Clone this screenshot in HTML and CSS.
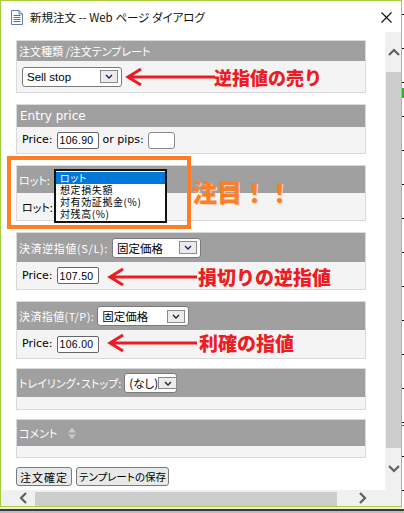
FILE: index.html
```html
<!DOCTYPE html>
<html lang="ja">
<head>
<meta charset="utf-8">
<title>新規注文 -- Web ページ ダイアログ</title>
<link rel="stylesheet" href="styles.css">
</head>
<body>
<div class="screen">
  <div class="window">
    <div class="titlebar">
      <svg class="app-icon" width="12" height="15" viewBox="0 0 12 15">
        <path d="M0.5 0.5 H8 L11.5 4 V14.5 H0.5 Z" fill="#fff" stroke="#5a7fb5"/>
        <path d="M8 0.5 V4 H11.5" fill="none" stroke="#5a7fb5"/>
        <path d="M2.5 5.5 H9.5 M2.5 7.5 H9.5 M2.5 9.5 H9.5 M2.5 11.5 H9.5" stroke="#3d6fc4"/>
      </svg>
      <span class="title">新規注文 -- Web ページ ダイアログ</span>
      <svg class="close" width="11" height="11" viewBox="0 0 11 11">
        <path d="M0.5 0.5 L10.5 10.5 M10.5 0.5 L0.5 10.5" stroke="#111" stroke-width="1.1"/>
      </svg>
    </div>
    <div class="main">
      <div class="content">
        <section class="panel p1">
          <div class="phead jp">注文種類 /注文テンプレート</div>
          <div class="pbody">
            <div class="select sel-type"><span class="sel-text lat">Sell stop</span><span class="ddbtn"><svg width="8" height="5" viewBox="0 0 8 5"><path d="M1 1 L4 4 L7 1" fill="none" stroke="#1b2447" stroke-width="1.4"/></svg></span></div>
          </div>
        </section>
        <section class="panel p2">
          <div class="phead lat-head">Entry price</div>
          <div class="pbody">
            <span class="lbl">Price:</span>
            <span class="input price">106.90</span>
            <span class="lbl pips-lbl">or pips:</span>
            <span class="input pips"></span>
          </div>
        </section>
        <section class="panel p3">
          <div class="phead jp">ロット:</div>
          <div class="pbody"><span class="jp body-jp">ロット:</span></div>
        </section>
        <section class="panel p4">
          <div class="phead jp"><span class="hlabel">決済逆指値(S/L):</span>
            <div class="select sel-fixed w89"><span class="sel-text jp-sel">固定価格</span><span class="ddbtn"><svg width="8" height="5" viewBox="0 0 8 5"><path d="M1 1 L4 4 L7 1" fill="none" stroke="#1b2447" stroke-width="1.4"/></svg></span></div>
          </div>
          <div class="pbody"><span class="lbl">Price:</span><span class="input price">107.50</span></div>
        </section>
        <section class="panel p5">
          <div class="phead jp"><span class="hlabel">決済指値(T/P):</span>
            <div class="select sel-fixed w92"><span class="sel-text jp-sel">固定価格</span><span class="ddbtn"><svg width="8" height="5" viewBox="0 0 8 5"><path d="M1 1 L4 4 L7 1" fill="none" stroke="#1b2447" stroke-width="1.4"/></svg></span></div>
          </div>
          <div class="pbody"><span class="lbl">Price:</span><span class="input price">106.00</span></div>
        </section>
        <section class="panel p6">
          <div class="phead jp"><span class="hlabel">トレイリング・ストップ:</span>
            <div class="select sel-none"><span class="sel-text jp-sel">(なし)</span><span class="ddbtn"><svg width="8" height="5" viewBox="0 0 8 5"><path d="M1 1 L4 4 L7 1" fill="none" stroke="#1b2447" stroke-width="1.4"/></svg></span></div>
          </div>
          <div class="pbody"></div>
        </section>
        <section class="panel p7">
          <div class="phead jp"><span class="hlabel">コメント</span>
            <svg class="sort" width="10" height="13" viewBox="0 0 10 13"><path d="M1 5.5 L5 1 L9 5.5 Z M1 7.5 L5 12 L9 7.5 Z" fill="#cbcbcb"/></svg>
          </div>
          <div class="pbody"></div>
        </section>
        <div class="buttons">
          <span class="btn b1">注文確定</span>
          <span class="btn b2">テンプレートの保存</span>
        </div>
      </div>
      <div class="vscroll">
        <div class="vbtn up"><svg width="12" height="8" viewBox="0 0 12 8"><path d="M1 7 L6 2 L11 7" fill="none" stroke="#606060" stroke-width="2.2"/></svg></div>
        <div class="vthumb"></div>
        <div class="vbtn down"><svg width="12" height="8" viewBox="0 0 12 8"><path d="M1 1 L6 6 L11 1" fill="none" stroke="#606060" stroke-width="2.2"/></svg></div>
      </div>
    </div>
    <div class="hscroll">
      <div class="hbtn left"><svg width="8" height="12" viewBox="0 0 8 12"><path d="M7 1 L2 6 L7 11" fill="none" stroke="#606060" stroke-width="2.2"/></svg></div>
      <div class="hthumb"></div>
      <div class="hgap"></div>
      <div class="hbtn right"><svg width="8" height="12" viewBox="0 0 8 12"><path d="M1 1 L6 6 L1 11" fill="none" stroke="#606060" stroke-width="2.2"/></svg></div>
      <div class="corner"></div>
    </div>
  </div>
  <div class="axis"></div>
  <div class="floor"></div>

  <!-- annotations drawn over the dialog -->
  <div class="lot-list">
    <div class="opt sel">ロット</div>
    <div class="opt">想定損失額</div>
    <div class="opt">対有効証拠金(%)</div>
    <div class="opt">対残高(%)</div>
  </div>
  <div class="orange-box"></div>
  <div class="note-orange">注目！！</div>

  <svg class="arrow a1" width="92" height="22" viewBox="0 0 92 22"><path d="M16 3 L3 11 L16 19 M3 11 H90" fill="none" stroke="#ed1c24" stroke-width="3"/></svg>
  <div class="note-red n1">逆指値の売り</div>

  <svg class="arrow a2" width="92" height="22" viewBox="0 0 92 22"><path d="M16 3 L3 11 L16 19 M3 11 H90" fill="none" stroke="#ed1c24" stroke-width="3"/></svg>
  <div class="note-red n2">損切りの逆指値</div>

  <svg class="arrow a3" width="92" height="22" viewBox="0 0 92 22"><path d="M16 3 L3 11 L16 19 M3 11 H90" fill="none" stroke="#ed1c24" stroke-width="3"/></svg>
  <div class="note-red n3">利確の指値</div>
</div>
</body>
</html>
```

FILE: styles.css
```css
* { box-sizing: border-box; }
html, body { margin: 0; padding: 0; }
body {
  width: 404px;
  height: 513px;
  overflow: hidden;
  background: #c0c0c0;
  font-family: "Noto Sans CJK JP", "DejaVu Sans", sans-serif;
  color: #000;
}
.screen {
  position: relative;
  width: 404px;
  height: 513px;
  display: grid;
  grid-template-columns: 402px 2px;
  grid-template-rows: 507px 6px;
}
.window {
  border: 1px solid #a6ce39;
  background: #fff;
  display: flex;
  flex-direction: column;
  overflow: hidden;
}
.axis {
  background:
    linear-gradient(#1fbf1f, #1fbf1f) 0 88px / 2px 10px no-repeat,
    linear-gradient(#e00, #e00) 0 425px / 2px 1px no-repeat,
    repeating-linear-gradient(to bottom, transparent 0 14px, #111 14px 15px, transparent 15px 34px),
    #fff;
}
.floor {
  grid-column: 1 / span 2;
  background: linear-gradient(to bottom, #ececec 0 2px, #3a3a3a 2px 4px, #bdbdbd 4px);
}

/* title bar */
.titlebar {
  height: 31px;
  flex: none;
  display: flex;
  align-items: center;
  padding-left: 10px;
  padding-right: 9px;
}
.app-icon { flex: none; margin-right: 7px; margin-top: 1px; }
.title {
  font-size: 11.5px;
  line-height: 16px;
  font-feature-settings: "palt" 1;
  color: #111;
  white-space: nowrap;
}
.close { margin-left: auto; flex: none; margin-top: 1px; }

/* main */
.main {
  height: 458px;
  flex: none;
  display: flex;
}
.content {
  width: 384px;
  flex: none;
  overflow: hidden;
  padding-left: 15px;
  display: flex;
  flex-direction: column;
}
.vscroll {
  width: 16px;
  flex: none;
  background: #f0f0f0;
  display: flex;
  flex-direction: column;
}
.vbtn { display: flex; justify-content: center; align-items: center; padding-left: 1px; }
.vbtn.up { height: 40px; }
.vthumb { height: 376px; background: #cdcdcd; margin-left: 1px; }
.vbtn.down { flex: 1; }

.hscroll {
  height: 16px;
  flex: none;
  background: #f0f0f0;
  display: flex;
}
.hbtn { display: flex; align-items: center; justify-content: center; }
.hbtn.left { width: 34px; padding-left: 10px; }
.hthumb { width: 302px; background: #cdcdcd; margin-top: 2px; }
.hgap { width: 17px; }
.hbtn.right { width: 17px; }
.corner { flex: 1; }

/* panels */
.panel {
  width: 350px;
  flex: none;
  border: 1px solid #dadada;
}
.phead {
  background: #a0a0a0;
  color: #fff;
  display: flex;
  align-items: center;
  padding-left: 2px;
  white-space: nowrap;
}
.pbody {
  background: #f4f4f4;
  display: flex;
  align-items: center;
  padding-left: 5px;
}
.jp {
  font-family: "Noto Sans CJK JP", sans-serif;
  font-size: 11px;
  line-height: 14px;
  font-feature-settings: "palt" 1;
}
.lat-head {
  font-family: "DejaVu Sans", sans-serif;
  font-size: 12px;
  line-height: 14px;
  padding-left: 3px;
}
.p1 { margin-top: 8px; }
.p1 .phead { height: 20px; }
.p1 .pbody { height: 31px; }
.p2 { margin-top: 11px; }
.p2 .phead { height: 22px; }
.p2 .pbody { height: 26px; }
.p3 { margin-top: 11px; }
.p3 .phead { height: 27px; }
.p3 .pbody { height: 27px; }
.p4 { margin-top: 11px; }
.p4 .phead { height: 29px; }
.p4 .pbody { height: 27px; }
.p5 { margin-top: 11px; }
.p5 .phead { height: 28px; }
.p5 .pbody { height: 28px; }
.p6 { margin-top: 9px; }
.p6 .phead { height: 28px; }
.p6 .pbody { height: 12px; }
.p7 { margin-top: 9px; }
.p7 .phead { height: 26px; }
.p7 .pbody { height: 11px; }

.body-jp { color: #000; }
.hlabel { margin-right: 4px; }
.p4 .hlabel { letter-spacing: 0.6px; }
.p5 .hlabel { letter-spacing: 0.4px; margin-right: 3px; }
.p6 .hlabel { margin-right: 3px; }
.sort { margin-left: 6px; }

/* controls */
.select {
  display: flex;
  align-items: center;
  background: #fff;
  border: 1px solid #7a7a7a;
  border-radius: 3px;
  padding-left: 4px;
  padding-right: 3px;
  color: #000;
}
.sel-text { flex: 1; white-space: nowrap; }
.lat {
  font-family: "Liberation Sans", sans-serif;
  font-size: 11.5px;
  line-height: 14px;
}
.jp-sel {
  font-family: "Noto Sans CJK JP", sans-serif;
  font-size: 11.5px;
  line-height: 14px;
}
.ddbtn {
  flex: none;
  width: 18px;
  height: 13px;
  border: 1px solid #8a8a8a;
  background: #ececec;
  display: flex;
  align-items: center;
  justify-content: center;
}
.sel-type { width: 100px; height: 20px; }
.sel-fixed { height: 20px; }
.w89 { width: 89px; }
.w92 { width: 92px; }
.sel-none { width: 53px; height: 20px; padding-right: 2px; }
.sel-none .ddbtn { width: 19px; height: 12px; }

.lbl {
  font-family: "DejaVu Sans", sans-serif;
  font-size: 11px;
  line-height: 14px;
}
.input {
  display: inline-flex;
  align-items: center;
  height: 17px;
  background: #fff;
  border: 1px solid #666;
  border-radius: 2px;
  font-family: "Liberation Sans", sans-serif;
  font-size: 10.5px;
  letter-spacing: 0.3px;
  padding-left: 2px;
}
.price { width: 42px; margin-left: 4px; }
.pips-lbl { margin-left: 4px; }
.pips { width: 27px; margin-left: 4px; border-color: #8a8a8a; border-radius: 3px; }

.buttons {
  margin-top: 9px;
  display: flex;
  gap: 4px;
}
.btn {
  height: 19px;
  display: flex;
  align-items: center;
  justify-content: center;
  background: #e9e9e9;
  border: 1px solid #7a7a7a;
  border-radius: 3px;
  font-family: "Noto Sans CJK JP", sans-serif;
  font-size: 11px;
  line-height: 14px;
  font-feature-settings: "palt" 1;
  white-space: nowrap;
}
.b1 { width: 56px; letter-spacing: 1px; }
.b2 { width: 93px; font-size: 10.5px; letter-spacing: 0; }

/* overlays */
.lot-list {
  position: absolute;
  left: 54px;
  top: 169px;
  width: 113px;
  height: 54px;
  border: 2px solid #111;
  background: #fff;
  font-family: "Noto Sans CJK JP", sans-serif;
  font-size: 10px;
  line-height: 12px;
  font-feature-settings: "palt" 1;
  padding-top: 1px;
}
.opt { height: 12px; padding-left: 4px; white-space: nowrap; letter-spacing: 0.6px; }
.opt.sel { background: #0078d7; color: #fff; }
.orange-box {
  position: absolute;
  left: 7px;
  top: 156px;
  width: 184px;
  height: 73px;
  border: 4px solid #ff7f27;
}
.note-orange {
  position: absolute;
  left: 192px;
  top: 176px;
  font-family: "Noto Sans CJK JP", sans-serif;
  font-weight: 900;
  font-size: 25px;
  line-height: 30px;
  color: #ff7f27;
  text-shadow: 1px 1px 0 #ffd2c0;
}
.arrow { position: absolute; }
.a1 { left: 125px; top: 66px; }
.a2 { left: 107px; top: 266px; }
.a3 { left: 107px; top: 332px; }
.note-red {
  position: absolute;
  font-family: "Noto Sans CJK JP", sans-serif;
  font-weight: 900;
  color: #ed1c24;
  line-height: 24px;
  white-space: nowrap;
}
.n1 { left: 214px; top: 65px; font-size: 18px; }
.n2 { left: 198px; top: 265px; font-size: 19px; }
.n3 { left: 199px; top: 331px; font-size: 19px; }
```
